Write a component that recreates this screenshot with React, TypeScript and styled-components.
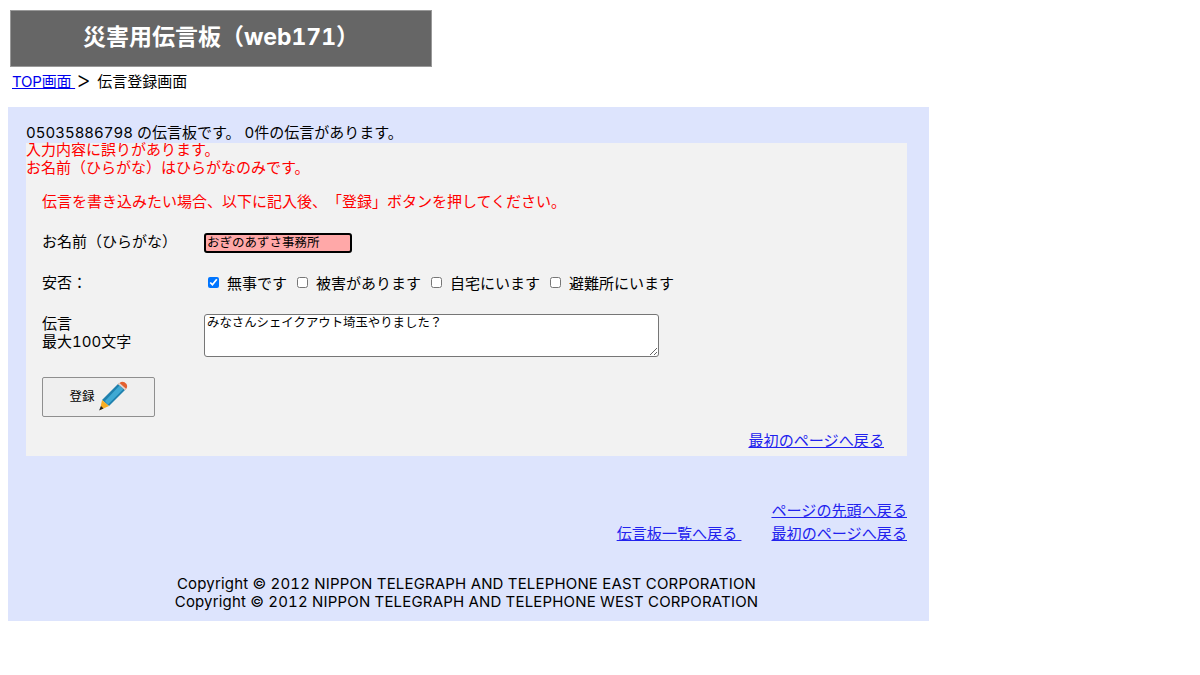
import React from 'react';
import styled, { createGlobalStyle } from 'styled-components';

const GlobalStyle = createGlobalStyle`
  html, body {
    margin: 0;
    padding: 0;
    background: #fff;
    color: #000;
    font-family: Inter, "Noto Sans CJK JP", sans-serif;
    font-size: 15px;
    text-spacing-trim: space-all;
    font-feature-settings: "tnum";
  }
`;

const Page = styled.div`
  width: 1200px;
  height: 675px;
  padding: 10px 0 0 8px;
  box-sizing: border-box;
  overflow: hidden;
`;

const Title = styled.h1`
  width: 422px;
  height: 57px;
  margin: 0 0 0 2px;
  box-sizing: border-box;
  border: 1px solid #999;
  background: #666;
  color: #fff;
  font-size: 23px;
  font-weight: bold;
  line-height: 53px;
  text-align: center;
`;

const Crumbs = styled.div`
  height: 40px;
  padding: 4px 0 0 4px;
  box-sizing: border-box;
  line-height: 22px;
`;

const Link = styled.a`
  color: #00e;
  text-decoration: underline;
  letter-spacing: -0.2px;
`;

const Arrow = styled.span`
  display: inline-block;
  width: 22px;
  padding-left: 1px;
  box-sizing: border-box;
  font-size: 23px;
  font-weight: 300;
  line-height: 14px;
  vertical-align: -1px;
`;

const Panel = styled.main`
  width: 921px;
  height: 514px;
  padding: 16px 22px 0 18px;
  box-sizing: border-box;
  background: #dde4fd;
`;

const Count = styled.div`
  height: 20px;
  line-height: 20px;
`;

const FormBox = styled.section`
  height: 313px;
  background: #f2f2f2;
  display: flex;
  flex-direction: column;
`;

const Errors = styled.div`
  color: #f00;
  line-height: 18px;
  margin-top: -2px;
`;

const Notice = styled.p`
  margin: 14px 0 0 16px;
  color: #f00;
  line-height: 22px;
`;

const Row = styled.div<{ $top: number }>`
  display: grid;
  grid-template-columns: 162px 1fr;
  margin: ${(p) => p.$top}px 0 0 16px;
`;

const Label = styled.div<{ $drop: number }>`
  line-height: 18px;
  padding-top: ${(p) => p.$drop}px;
`;

const NameInput = styled.input`
  display: block;
  width: 148px;
  height: 20px;
  box-sizing: border-box;
  padding: 0 1px 3px;
  border: 2px solid #000;
  border-radius: 3px;
  background: #ffa8a8;
  font: 12.5px Inter, "Noto Sans CJK JP", sans-serif;
  outline: none;
`;

const Checks = styled.div`
  display: flex;
  align-items: center;
  gap: 10px;
  height: 20px;
  padding-left: 4px;
`;

const CheckLabel = styled.label`
  display: flex;
  align-items: center;
  white-space: nowrap;
`;

const Check = styled.input`
  width: 11px;
  height: 11px;
  margin: 0 8px 0 0;
`;

const Message = styled.textarea`
  display: block;
  width: 455px;
  height: 43px;
  box-sizing: border-box;
  padding: 0 2px;
  font: 12.4px/15px Inter, "Noto Sans CJK JP", sans-serif;
  border: 1px solid #767676;
  border-radius: 3px;
`;

const Submit = styled.button`
  display: flex;
  align-items: center;
  justify-content: center;
  gap: 3px;
  width: 113px;
  height: 40px;
  margin: 20px 0 0 16px;
  padding: 0 0 3px 0;
  box-sizing: border-box;
  border: 1px solid #8f8f8f;
  border-radius: 2px;
  background: #efefef;
  font: 12.5px Inter, "Noto Sans CJK JP", sans-serif;
  color: #000;
`;

const BackRow = styled.div`
  margin-top: 14px;
  padding-right: 23px;
  text-align: right;
  line-height: 20px;
`;

const BlueLink = styled.a`
  color: #2222ee;
  font-size: 15.1px;
  text-decoration: underline;
`;

const PageLinks = styled.nav`
  display: grid;
  grid-template-columns: auto auto;
  justify-content: end;
  column-gap: 30px;
  row-gap: 3px;
  margin-top: 45px;
  line-height: 20px;
  text-align: right;
`;

const Footer = styled.footer`
  margin-top: 31px;
  text-align: center;
  line-height: 18px;
  letter-spacing: 0.17px;
`;

const Pencil = () => (
  <svg width="30" height="30" viewBox="0 0 30 30">
    <path d="M20 3 L27 9 L11 25 L4 19 Z" fill="#1f80ad" />
    <path d="M21.5 4.5 L25.5 8 L10 23.5 L7 20 Z" fill="#3fa9d3" />
    <path d="M23 1 Q26 0 28.5 3 Q30 6 28 8 L27 9 L20 3 Z" fill="#e4602f" />
    <path d="M21.5 2 L28 7.8 L27 9 L20 3 Z" fill="#d9d9d9" />
    <path d="M4 19 L11 25 L2 29 Z" fill="#f7ae22" />
    <path d="M3 25 L5.5 27.5 L1 29.5 Z" fill="#222" />
  </svg>
);

const options = ['無事です', '被害があります', '自宅にいます', '避難所にいます'];

export default function App() {
  return (
    <Page>
      <GlobalStyle />
      <Title>災害用伝言板（web171）</Title>
      <Crumbs>
        <Link href="#">TOP画面 </Link>
        <Arrow>&gt;</Arrow>伝言登録画面
      </Crumbs>
      <Panel>
        <Count>05035886798 の伝言板です。 0件の伝言があります。</Count>
        <FormBox>
          <Errors>
            入力内容に誤りがあります。
            <br />
            お名前（ひらがな）はひらがなのみです。
          </Errors>
          <Notice>伝言を書き込みたい場合、以下に記入後、「登録」ボタンを押してください。</Notice>
          <Row $top={20}>
            <Label $drop={0}>お名前（ひらがな）</Label>
            <NameInput defaultValue="おぎのあずさ事務所" />
          </Row>
          <Row $top={19}>
            <Label $drop={2}>安否：</Label>
            <Checks>
              {options.map((o, i) => (
                <CheckLabel key={o}>
                  <Check type="checkbox" defaultChecked={i === 0} />
                  {o}
                </CheckLabel>
              ))}
            </Checks>
          </Row>
          <Row $top={22}>
            <Label $drop={1}>
              伝言
              <br />
              最大100文字
            </Label>
            <Message defaultValue="みなさんシェイクアウト埼玉やりました？" />
          </Row>
          <Submit type="button">
            登録
            <Pencil />
          </Submit>
          <BackRow>
            <BlueLink href="#">最初のページへ戻る</BlueLink>
          </BackRow>
        </FormBox>
        <PageLinks>
          <span />
          <BlueLink href="#">ページの先頭へ戻る</BlueLink>
          <BlueLink href="#">伝言板一覧へ戻る&nbsp;</BlueLink>
          <BlueLink href="#">最初のページへ戻る</BlueLink>
        </PageLinks>
        <Footer>
          Copyright © 2012 NIPPON TELEGRAPH AND TELEPHONE EAST CORPORATION
          <br />
          Copyright © 2012 NIPPON TELEGRAPH AND TELEPHONE WEST CORPORATION
        </Footer>
      </Panel>
    </Page>
  );
}
